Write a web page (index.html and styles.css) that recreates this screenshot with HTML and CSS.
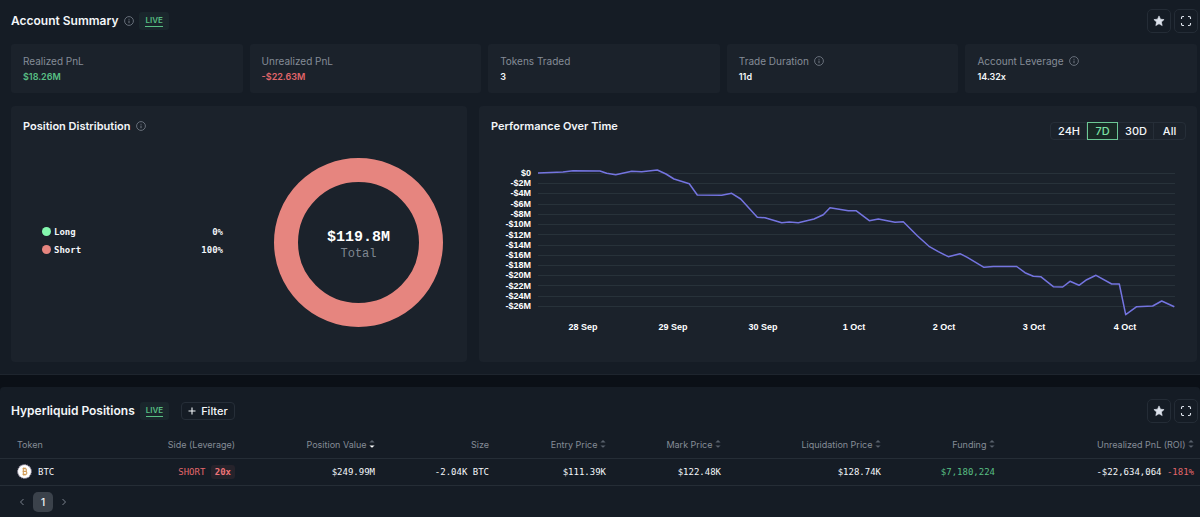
FILE: index.html
```
<!DOCTYPE html>
<html lang="en">
<head>
  <meta charset="UTF-8">
  <meta name="viewport" content="width=device-width, initial-scale=1.0">
  <title>Account Summary</title>
  <link rel="stylesheet" href="styles.css">
</head>
<body>
  <!-- Shared icons -->
  <svg class="sprite" aria-hidden="true">
    <symbol id="icon-info" viewBox="0 0 10 10">
      <circle cx="5" cy="5" r="4.4" fill="none" stroke="currentColor" stroke-width="0.8"/>
      <path d="M5 4.6v2.6M5 2.8v0.9" stroke="currentColor" stroke-width="0.9"/>
    </symbol>
    <symbol id="icon-star" viewBox="0 0 12 12">
      <path d="M6 0.9l1.5 3.3 3.6 0.4-2.7 2.4 0.8 3.6L6 8.8l-3.2 1.8 0.8-3.6L0.9 4.6l3.6-0.4z" fill="currentColor" stroke="currentColor" stroke-width="0.6" stroke-linejoin="round"/>
    </symbol>
    <symbol id="icon-expand" viewBox="0 0 12 12">
      <path d="M1.5 4V2.7a1.2 1.2 0 0 1 1.2-1.2H4M8 1.5h1.3a1.2 1.2 0 0 1 1.2 1.2V4M10.5 8v1.3a1.2 1.2 0 0 1-1.2 1.2H8M4 10.5H2.7a1.2 1.2 0 0 1-1.2-1.2V8" fill="none" stroke="currentColor" stroke-width="1.1"/>
    </symbol>
    <symbol id="icon-sort" viewBox="0 0 6 10">
      <path class="sort-up" d="M0.4 3.4L3 1l2.6 2.4z"/>
      <path class="sort-down" d="M0.4 6.4h5.2L3 8.8z"/>
    </symbol>
  </svg>

  <section class="block">
    <header class="block-header">
      <h2>Account Summary</h2>
      <svg class="info"><use href="#icon-info"/></svg>
      <span class="live"><span>LIVE</span></span>
      <div class="tools">
        <button class="icon-btn" aria-label="Favorite"><svg><use href="#icon-star"/></svg></button>
        <button class="icon-btn" aria-label="Fullscreen"><svg><use href="#icon-expand"/></svg></button>
      </div>
    </header>

    <div class="stats">
      <div class="stat">
        <div class="stat-label">Realized PnL</div>
        <div class="stat-value green">$18.26M</div>
      </div>
      <div class="stat">
        <div class="stat-label">Unrealized PnL</div>
        <div class="stat-value red">-$22.63M</div>
      </div>
      <div class="stat">
        <div class="stat-label">Tokens Traded</div>
        <div class="stat-value">3</div>
      </div>
      <div class="stat">
        <div class="stat-label">Trade Duration <svg class="info"><use href="#icon-info"/></svg></div>
        <div class="stat-value">11d</div>
      </div>
      <div class="stat">
        <div class="stat-label">Account Leverage <svg class="info"><use href="#icon-info"/></svg></div>
        <div class="stat-value">14.32x</div>
      </div>
    </div>

    <div class="panels">
      <div class="panel">
        <div class="panel-header">
          <h3>Position Distribution</h3>
          <svg class="info"><use href="#icon-info"/></svg>
        </div>
        <div class="distribution">
          <ul class="legend">
            <li><i class="dot long"></i>Long<span>0%</span></li>
            <li><i class="dot short"></i>Short<span>100%</span></li>
          </ul>
          <div class="donut">
            <strong>$119.8M</strong>
            <span>Total</span>
          </div>
        </div>
      </div>

      <div class="panel">
        <div class="panel-header">
          <h3>Performance Over Time</h3>
          <div class="range">
            <button>24H</button>
            <button class="active">7D</button>
            <button>30D</button>
            <button>All</button>
          </div>
        </div>
        <svg class="chart" viewBox="0 0 694 200">
          <path class="grid" d="M47 23.5H684M47 33.5H684M47 43.5H684M47 54.5H684M47 64.5H684M47 74.5H684M47 84.5H684M47 95.5H684M47 105.5H684M47 115.5H684M47 125.5H684M47 135.5H684M47 146.5H684M47 156.5H684"/>
          <g class="y-axis">
            <text x="40" y="26">$0</text>
            <text x="40" y="36">-$2M</text>
            <text x="40" y="46">-$4M</text>
            <text x="40" y="57">-$6M</text>
            <text x="40" y="67">-$8M</text>
            <text x="40" y="77">-$10M</text>
            <text x="40" y="88">-$12M</text>
            <text x="40" y="98">-$14M</text>
            <text x="40" y="108">-$16M</text>
            <text x="40" y="118">-$18M</text>
            <text x="40" y="128">-$20M</text>
            <text x="40" y="139">-$22M</text>
            <text x="40" y="149">-$24M</text>
            <text x="40" y="159">-$26M</text>
          </g>
          <g class="x-axis">
            <text x="92" y="180">28 Sep</text>
            <text x="182" y="180">29 Sep</text>
            <text x="272" y="180">30 Sep</text>
            <text x="363" y="180">1 Oct</text>
            <text x="453" y="180">2 Oct</text>
            <text x="543" y="180">3 Oct</text>
            <text x="634" y="180">4 Oct</text>
          </g>
          <polyline class="line" points="47,23 72,22 82,20.7 109,21 115.7,23.3 124.7,24.7 140.7,21.3 150.7,21.7 166.3,20 175,24 183,29 198.3,33.7 206.3,45 230.7,45.3 240.7,43.3 249.7,49 266.3,67.3 274,67.7 290.7,72.7 298.3,72 307.3,72.7 323,69 332.3,64.7 339,57.8 357.3,60.7 365,60.7 378.3,70.7 387.3,69 404,72.3 412.3,71.7 426.3,85.7 438,96.3 447.3,101.7 457.3,106.7 469,103.7 476.3,107.3 493,117.3 502.3,116.5 525.7,116.5 534,122.7 542.3,126.3 549.7,126.7 562.3,136.7 571.7,137 579,131.3 588,135.3 595.7,129.7 605,125.3 620.7,134 628.3,134 634.7,164.7 645.7,156.7 661.7,156 670.7,151 683.3,156.7"/>
        </svg>
      </div>
    </div>
  </section>

  <section class="block positions">
    <header class="block-header">
      <h2>Hyperliquid Positions</h2>
      <span class="live"><span>LIVE</span></span>
      <button class="filter-btn">
        <svg viewBox="0 0 8 8"><path d="M4 0.5v7M0.5 4h7" stroke="currentColor" stroke-width="1.1"/></svg>
        Filter
      </button>
      <div class="tools">
        <button class="icon-btn" aria-label="Favorite"><svg><use href="#icon-star"/></svg></button>
        <button class="icon-btn" aria-label="Fullscreen"><svg><use href="#icon-expand"/></svg></button>
      </div>
    </header>

    <table>
      <colgroup>
        <col class="c-token"><col class="c-side"><col class="c-value"><col class="c-size"><col class="c-entry"><col class="c-mark"><col class="c-liq"><col class="c-funding"><col class="c-pnl">
      </colgroup>
      <thead>
        <tr>
          <th>Token</th>
          <th>Side (Leverage)</th>
          <th>Position Value <svg class="sort desc"><use href="#icon-sort"/></svg></th>
          <th>Size</th>
          <th>Entry Price <svg class="sort"><use href="#icon-sort"/></svg></th>
          <th>Mark Price <svg class="sort"><use href="#icon-sort"/></svg></th>
          <th>Liquidation Price <svg class="sort"><use href="#icon-sort"/></svg></th>
          <th>Funding <svg class="sort"><use href="#icon-sort"/></svg></th>
          <th>Unrealized PnL (ROI) <svg class="sort"><use href="#icon-sort"/></svg></th>
        </tr>
      </thead>
      <tbody>
        <tr>
          <td>
            <div class="token">
              <svg viewBox="0 0 14 14">
                <circle cx="7" cy="7" r="6.3" fill="#fff"/>
                <circle cx="7" cy="7" r="6.4" fill="none" stroke="#a9a0b4" stroke-width="1" stroke-dasharray="1.2 0.8"/>
                <path d="M5.2 4.3h2.3a1.3 1.3 0 0 1 0 2.6H5.2h2.6a1.4 1.4 0 0 1 0 2.8H5.2M5.9 4.3v5.4M6.2 3.2v1M7.5 3.2v1M6.2 9.8v1M7.5 9.8v1" fill="none" stroke="#d09a55" stroke-width="1"/>
              </svg>
              BTC
            </div>
          </td>
          <td><span class="red">SHORT</span> <b class="leverage">20x</b></td>
          <td>$249.99M</td>
          <td>-2.04K BTC</td>
          <td>$111.39K</td>
          <td>$122.48K</td>
          <td>$128.74K</td>
          <td class="green">$7,180,224</td>
          <td>-$22,634,064 <span class="red">-181%</span></td>
        </tr>
      </tbody>
    </table>

    <nav class="pagination">
      <button aria-label="Previous page"><svg viewBox="0 0 6 8"><path d="M4.5 1L1.5 4l3 3"/></svg></button>
      <button class="current">1</button>
      <button aria-label="Next page"><svg viewBox="0 0 6 8"><path d="M1.5 1l3 3-3 3"/></svg></button>
    </nav>
  </section>
</body>
</html>
```
FILE: styles.css
```
* {
  box-sizing: border-box;
}

body {
  font-family: Inter, "Liberation Sans", sans-serif;
  font-size: 10px;
  line-height: 14px;
  margin: 0;
  background-color: #0b1017;
  color: #f3f6f9;
}

button {
  font: inherit;
  color: inherit;
  background: none;
  border: 0;
  padding: 0;
  cursor: pointer;
}

h2, h3 {
  margin: 0;
  font-weight: 600;
}

h2 {
  font-size: 12px;
}

h3 {
  font-size: 11px;
}

svg {
  display: block;
}

.sprite {
  display: none;
}

.green {
  color: #58bf83;
}

.red {
  color: #e2666a;
}

.info {
  width: 10px;
  height: 10px;
  color: #7a828d;
}

/* Blocks */
.block {
  background-color: #151c25;
  border-bottom: 1px solid #1e252e;
  padding-bottom: 12px;
}

.block-header {
  display: flex;
  align-items: center;
  padding: 9px 2px 11px 11px;
}

.block-header .info {
  margin-left: 6px;
}

.live {
  margin-left: 5px;
  padding: 2px 6px 3px;
  border-radius: 3px;
  background-color: #1a262c;
  color: #58bf83;
  font-size: 8px;
  font-weight: 600;
  line-height: 12px;
}

.live span {
  display: block;
  border-bottom: 1px solid #58bf83;
}

.tools {
  display: flex;
  gap: 3px;
  margin-left: auto;
}

.icon-btn {
  display: flex;
  align-items: center;
  justify-content: center;
  width: 24px;
  height: 24px;
  border: 1px solid #242c36;
  border-radius: 5px;
  color: #dde3ec;
}

.icon-btn svg {
  width: 12px;
  height: 12px;
}

/* Stat cards */
.stats {
  display: grid;
  grid-template-columns: repeat(5, 1fr);
  gap: 7px;
  padding: 0 3px 0 11px;
}

.stat {
  padding: 9px 12px 8px;
  border-radius: 3px;
  background-color: #1b222b;
}

.stat-label {
  display: flex;
  align-items: center;
  gap: 5px;
  line-height: 16px;
  color: #858c97;
}

.stat-value {
  font-size: 9px;
  font-weight: 600;
  line-height: 16px;
}

/* Chart panels */
.panels {
  display: grid;
  grid-template-columns: 456fr 718fr;
  gap: 12px;
  margin-top: 13px;
  padding: 0 3px 0 11px;
}

.panel {
  display: flex;
  flex-direction: column;
  padding: 12px;
  border-radius: 4px;
  background-color: #1b222b;
}

.panel-header {
  display: flex;
  align-items: flex-start;
  height: 32px;
  line-height: 16px;
}

.panel-header .info {
  margin: 3px 0 0 5px;
}

.distribution {
  flex: 1;
  display: flex;
  align-items: center;
  justify-content: space-between;
  padding: 0 12px 16px 19px;
}

.legend {
  width: 181px;
  margin: 0;
  padding: 0 0 3px;
  list-style: none;
  font-family: "DejaVu Sans Mono", monospace;
  font-size: 9px;
  font-weight: bold;
  line-height: 18px;
}

.legend li {
  display: flex;
  align-items: center;
}

.legend span {
  margin-left: auto;
}

.dot {
  width: 9px;
  height: 9px;
  margin-right: 3px;
  border-radius: 50%;
}

.long {
  background-color: #84f7ae;
}

.short {
  background-color: #e6857f;
}

.donut {
  display: flex;
  flex-direction: column;
  align-items: center;
  justify-content: center;
  width: 169px;
  height: 169px;
  padding-top: 8px;
  border: 24px solid #e6857f;
  border-radius: 50%;
  font-family: "Liberation Mono", monospace;
  font-size: 12px;
  line-height: 16px;
  color: #7f8791;
}

.donut strong {
  font-size: 15px;
  color: #fff;
}

.range {
  display: flex;
  margin: 4px -1px 0 auto;
  border: 1px solid #262e38;
  border-radius: 4px;
}

.range button {
  min-width: 31px;
  height: 18px;
  margin: -1px 0;
  padding: 0 6px;
  border: 1px solid transparent;
  border-right-color: #262e38;
  font-size: 11px;
  font-weight: 500;
}

.range button:last-child {
  border-right-color: transparent;
}

.range .active {
  border-color: #6cc795;
  background-color: #182824;
  color: #7be0a4;
}

.chart {
  width: 100%;
  font-family: "Liberation Sans", Arial, sans-serif;
  font-size: 9px;
  font-weight: bold;
  fill: #fff;
}

.grid {
  stroke: #28323a;
}

.y-axis {
  text-anchor: end;
}

.x-axis {
  text-anchor: middle;
}

.line {
  fill: none;
  stroke: #7474e0;
  stroke-width: 1.5;
  stroke-linejoin: round;
}

/* Positions */
.positions {
  margin-top: 12px;
  padding-bottom: 8px;
  border-bottom: 0;
  border-radius: 4px 4px 0 0;
}

.positions .block-header {
  padding: 12px 2px 9px 11px;
}

.filter-btn {
  display: flex;
  align-items: center;
  gap: 5px;
  height: 18px;
  margin-left: 12px;
  padding: 0 6px;
  border: 1px solid #262e38;
  border-radius: 4px;
  font-size: 11px;
  font-weight: 500;
}

.filter-btn svg {
  width: 8px;
  height: 8px;
}

table {
  width: 100%;
  table-layout: fixed;
  border-collapse: collapse;
}

.c-token { width: 121px; }
.c-side { width: 120px; }
.c-value { width: 140px; }
.c-size { width: 114px; }
.c-entry { width: 117px; }
.c-mark { width: 115px; }
.c-liq { width: 160px; }
.c-funding { width: 114px; }
.c-pnl { width: 199px; }

th, td {
  height: 27px;
  padding: 0 6px 0 0;
  border-bottom: 1px solid #252d36;
  font-size: 9px;
  text-align: right;
  white-space: nowrap;
}

th:first-child, td:first-child {
  padding-left: 17px;
  text-align: left;
}

th {
  height: 26px;
  font-weight: 400;
  color: #858c97;
}

td {
  font-family: "DejaVu Sans Mono", monospace;
}

.sort {
  display: inline-block;
  width: 6px;
  height: 10px;
  vertical-align: -1px;
  fill: #59616c;
}

.sort-down {
  fill: var(--down);
}

.desc {
  --down: #fff;
}

.token {
  display: flex;
  align-items: center;
  gap: 6px;
}

.token svg {
  width: 15px;
  height: 15px;
}

.leverage {
  display: inline-block;
  padding: 0 4px;
  border-radius: 3px;
  background-color: #26232b;
  color: #ef7478;
}

.pagination {
  display: flex;
  align-items: center;
  gap: 1px;
  padding: 6px 12px 0;
}

.pagination button {
  width: 20px;
  height: 20px;
  border-radius: 5px;
  font-weight: 500;
}

.pagination svg {
  width: 6px;
  height: 8px;
  margin: auto;
  fill: none;
  stroke: #7a828d;
}

.pagination .current {
  background-color: #3b424b;
}
```
